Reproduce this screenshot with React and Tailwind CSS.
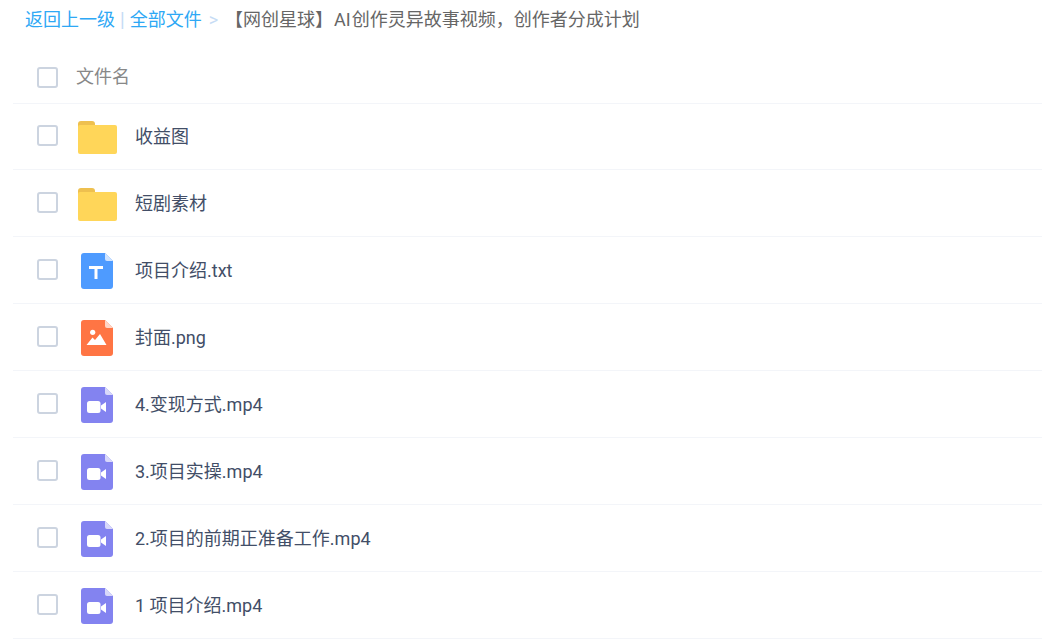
import React from 'react';

const files = [
    { name: '收益图', type: 'folder' },
    { name: '短剧素材', type: 'folder' },
    { name: '项目介绍.txt', type: 'txt' },
    { name: '封面.png', type: 'image' },
    { name: '4.变现方式.mp4', type: 'video' },
    { name: '3.项目实操.mp4', type: 'video' },
    { name: '2.项目的前期正准备工作.mp4', type: 'video' },
    { name: '1 项目介绍.mp4', type: 'video' },
];

const Checkbox = () => (
    <span className="block w-[21px] h-[21px] shrink-0 rounded-[3px] border-2 border-[#ccd4e0] bg-white" />
);

const FolderIcon = () => (
    <svg width="40" height="33" viewBox="0 0 40 33" className="block">
        <path d="M1 7V3a3 3 0 0 1 3-3h11a3 3 0 0 1 3 3v4z" fill="#eec04f" />
        <rect x="1" y="4" width="39" height="29" rx="2" fill="#ffd659" />
    </svg>
);

const FileShell = ({ color, fold, children }) => (
    <svg width="32" height="36" viewBox="0 0 32 36" className="block">
        <path d="M3 0h21l8 8v25a3 3 0 0 1-3 3H3a3 3 0 0 1-3-3V3a3 3 0 0 1 3-3z" fill={color} />
        <path d="M24 0l8 8h-6a2 2 0 0 1-2-2z" fill={fold} />
        {children}
    </svg>
);

const FileIcon = ({ type }) => {
    if (type === 'folder') return <FolderIcon />;
    if (type === 'txt') {
        return (
            <FileShell color="#4e9bff" fold="#cfe3ff">
                <path d="M8 13h14v3h-5.500v10h-3V16H8z" fill="#fff" />
            </FileShell>
        );
    }
    if (type === 'image') {
        return (
            <FileShell color="#ff7544" fold="#ffd5c6">
                <circle cx="11.700" cy="12.300" r="2.600" fill="#fff" />
                <path d="M5.500 25l6-7.500 2.500 2.500 5-6 6.500 11z" fill="#fff" />
            </FileShell>
        );
    }
    return (
        <FileShell color="#8383f0" fold="#d8d8fa">
            <rect x="6" y="14" width="13.500" height="12" rx="2.500" fill="#fff" />
            <path d="M20 18.500l5-3.500v10l-5-3.500z" fill="#fff" />
        </FileShell>
    );
};

const FileRow = ({ file }) => (
    <div className="flex items-center h-[67px] first:h-[66px] ml-[13px] pl-6 pb-[2px] first:pb-[3px] border-b border-[#f3f5f9]">
        <Checkbox />
        <div className="w-10 ml-[19px] flex justify-center shrink-0 mt-1">
            <FileIcon type={file.type} />
        </div>
        <span className="ml-[18px] mt-[2px] text-[#424e67]">{file.name}</span>
    </div>
);

export default function App() {
    return (
        <div className="w-[1042px] h-[639px] overflow-hidden bg-white text-[18px] font-['Roboto','Noto_Sans_CJK_SC',sans-serif]">
            <div className="flex items-center h-[38px] pl-[25px] whitespace-nowrap">
                <span className="text-[#2ea8f5]">返回上一级</span>
                <span className="mx-[5px] text-[#c6dcf5] font-['Liberation_Sans'] text-[18px]">|</span>
                <span className="text-[#2ea8f5]">全部文件</span>
                <span className="mx-[7px] text-[#c6dcf5]">&gt;</span>
                <span className="text-[#666666]">【网创星球】<span className="mx-px">AI</span>创作灵异故事视频，创作者分成计划</span>
            </div>
            <div className="flex items-center h-[66px] ml-[13px] pl-6 pt-[13px] border-b border-[#f3f5f9]">
                <Checkbox />
                <span className="ml-[18px] -mt-[2px] text-[#888888]">文件名</span>
            </div>
            <div>
                {files.map((file) => (
                    <FileRow key={file.name} file={file} />
                ))}
            </div>
        </div>
    );
}
